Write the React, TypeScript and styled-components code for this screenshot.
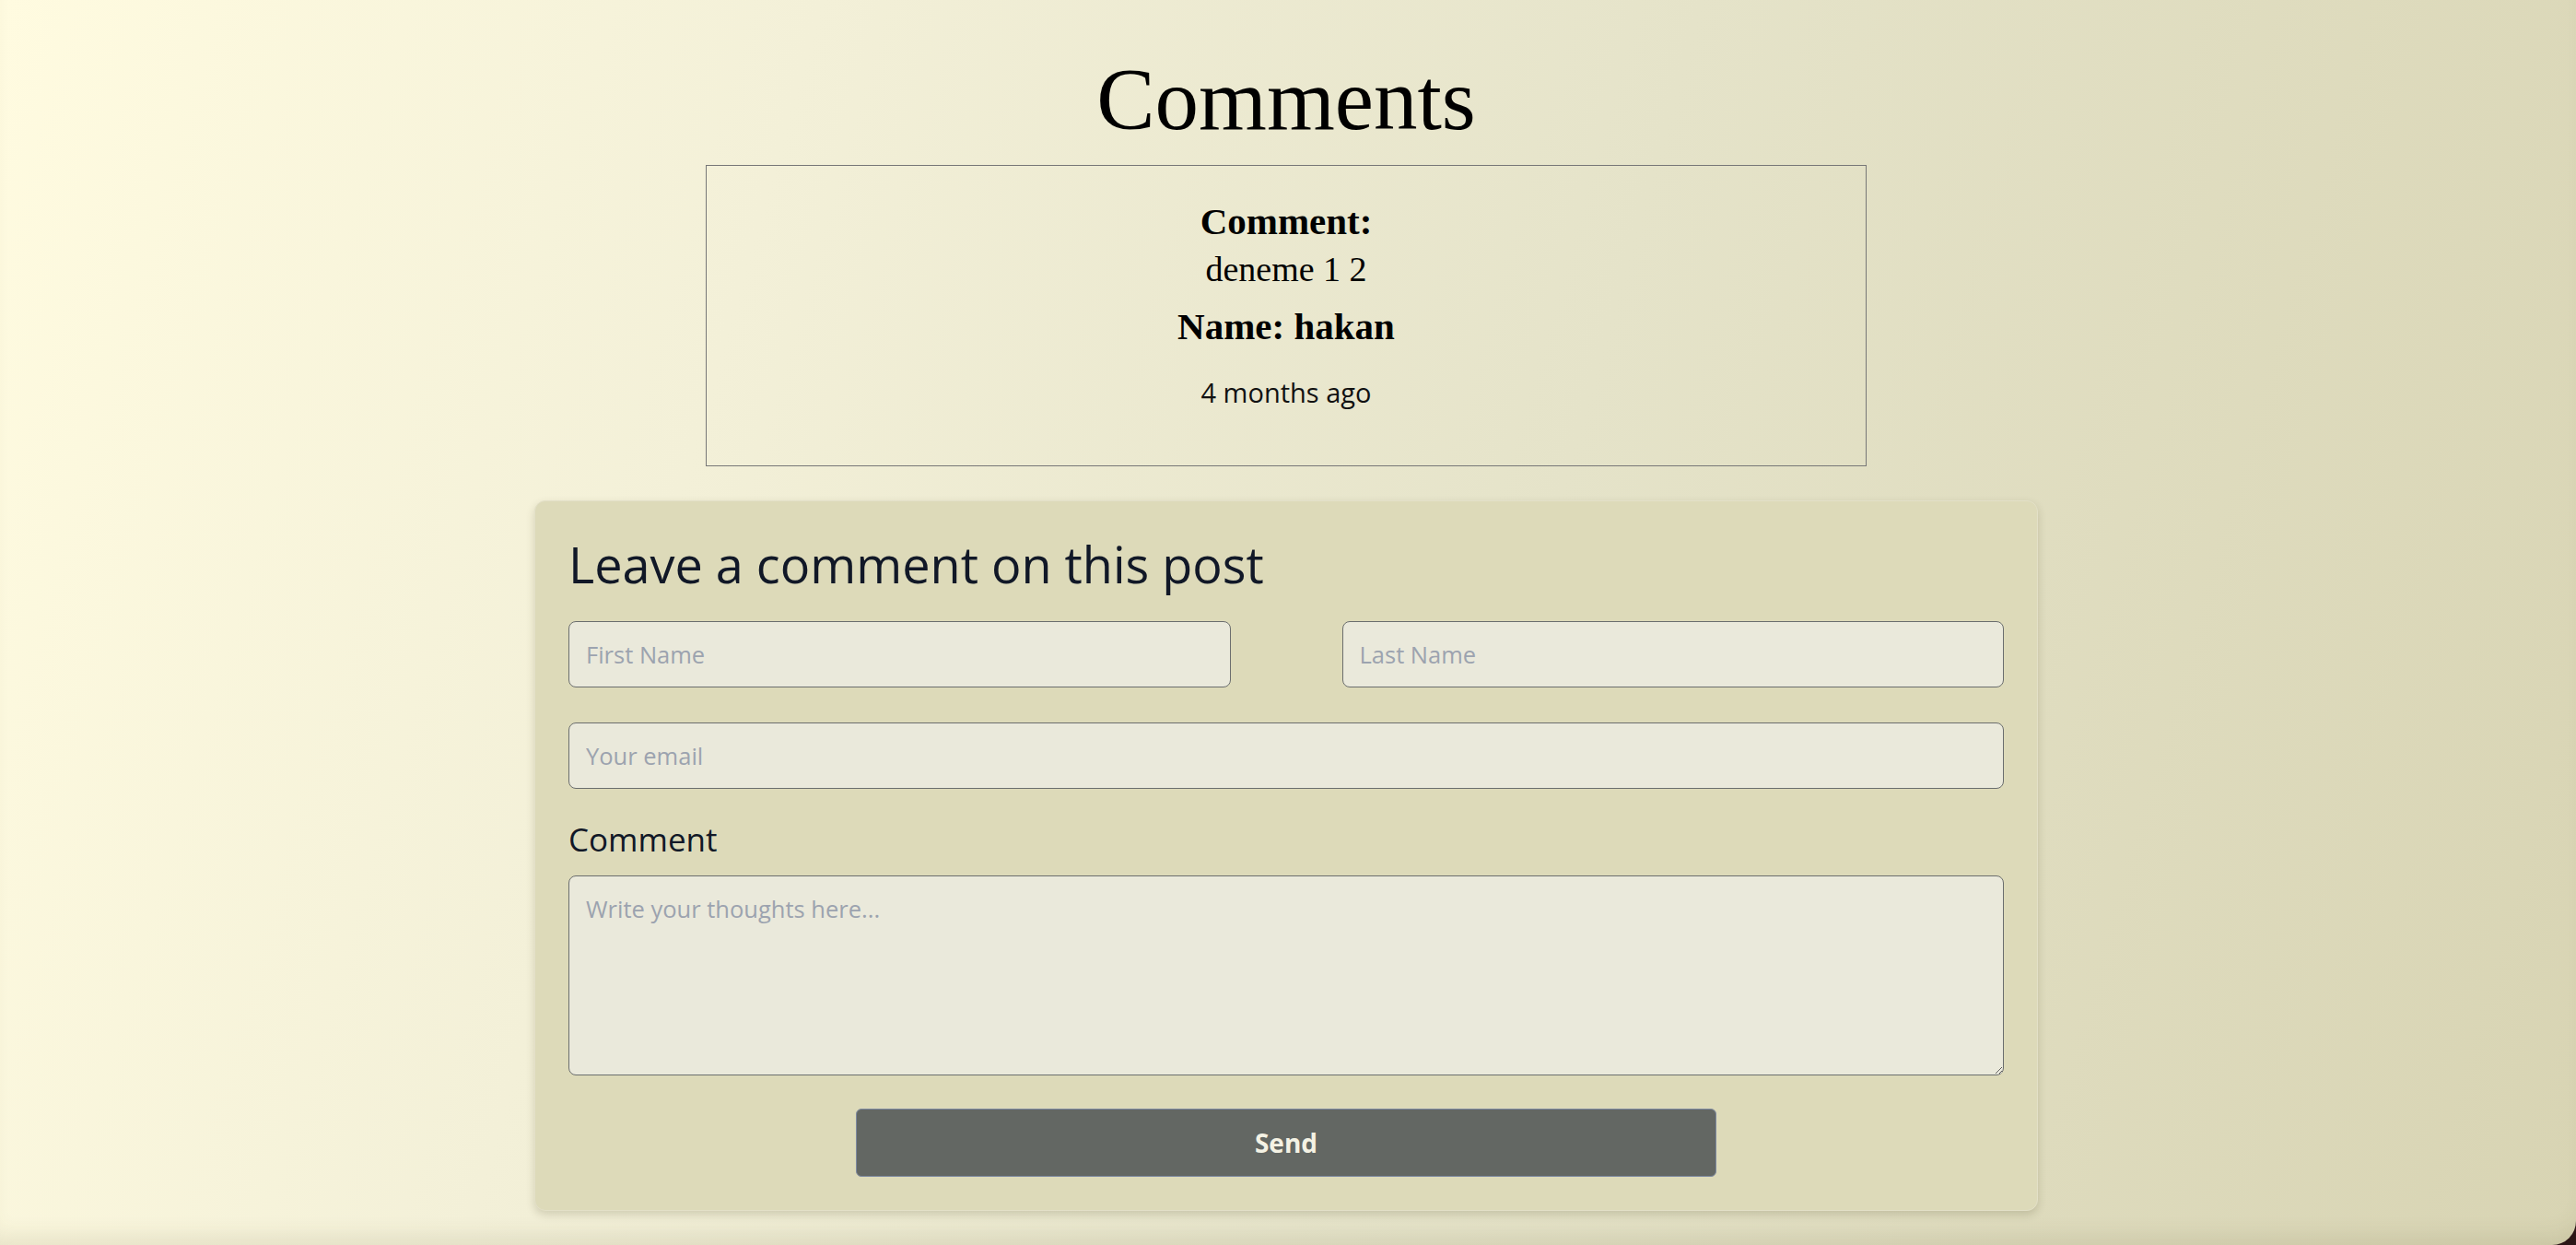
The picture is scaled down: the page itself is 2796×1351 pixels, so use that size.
import styled, { createGlobalStyle } from "styled-components";

const GlobalStyle = createGlobalStyle`
  html,
  body {
    margin: 0;
    padding: 0;
    background: #2b1616;
  }

  * {
    box-sizing: border-box;
  }
`;

const Page = styled.main`
  min-height: 100vh;
  display: flex;
  flex-direction: column;
  align-items: center;
  padding: 0 4px 28px 0;
  background: linear-gradient(106deg, #fffbe0 0%, #f3f0d8 28%, #e5e3c9 58%, #d8d4b3 100%);
  border-bottom-right-radius: 26px;
  box-shadow: inset 0 -22px 24px -14px rgba(90, 80, 40, 0.12);
`;

const Title = styled.h1`
  margin: 53px 0 16px;
  font-family: "Liberation Serif", "Times New Roman", serif;
  font-size: 95px;
  font-weight: 400;
  line-height: normal;
  color: #000;
`;

const CommentBox = styled.section`
  width: 1260px;
  padding: 36px 0 60px;
  border: 1px solid #777;
  display: flex;
  flex-direction: column;
  align-items: center;
`;

const Label = styled.h3`
  margin: 0;
  font-family: "Liberation Serif", "Times New Roman", serif;
  font-size: 41px;
  font-weight: 700;
  line-height: normal;
  color: #000;
`;

const Body = styled.p`
  margin: 6px 0 16px;
  font-family: "Liberation Serif", "Times New Roman", serif;
  font-size: 38px;
  line-height: normal;
  color: #000;
`;

const Time = styled.p`
  margin: 28px 0 0;
  font-family: "Open Sans", "Liberation Sans", sans-serif;
  font-size: 29px;
  line-height: normal;
  color: #111;
`;

const Card = styled.form`
  width: 1632px;
  margin-top: 37px;
  padding: 36px;
  background: #dddab9;
  border: 1px solid #e3e0c8;
  border-radius: 12px;
  box-shadow: 0 4px 10px rgba(60, 55, 20, 0.18);
  font-family: "Open Sans", "Liberation Sans", sans-serif;
`;

const CardTitle = styled.h2`
  margin: 0 0 29px;
  font-size: 54px;
  font-weight: 400;
  line-height: 1.2;
  color: #111827;
`;

const Row = styled.div`
  display: grid;
  grid-template-columns: 1fr 1fr;
  column-gap: 121px;
  margin-bottom: 38px;
`;

const Field = styled.input`
  width: 100%;
  height: 72px;
  padding: 0 18px;
  background: #eae9db;
  border: 1px solid #6b6e6e;
  border-radius: 8px;
  font-family: "Open Sans", "Liberation Sans", sans-serif;
  font-size: 25.5px;
  color: #111827;

  &::placeholder {
    color: #9ca3af;
  }
`;

const FieldLabel = styled.label`
  display: block;
  margin: 31px 0 16px;
  font-size: 35px;
  line-height: normal;
  color: #111827;
`;

const TextArea = styled.textarea`
  display: block;
  width: 100%;
  height: 217px;
  padding: 16px 18px;
  background: #eae9db;
  border: 1px solid #6b6e6e;
  border-radius: 8px;
  font-family: "Open Sans", "Liberation Sans", sans-serif;
  font-size: 25.5px;
  line-height: 1.5;
  color: #111827;

  &::placeholder {
    color: #9ca3af;
  }
`;

const SendButton = styled.button`
  display: block;
  width: 60%;
  height: 74px;
  margin: 36px auto 0;
  background: #636763;
  border: 1px solid #7d89a0;
  border-radius: 6px;
  font-family: "Open Sans", "Liberation Sans", sans-serif;
  font-size: 28px;
  font-weight: 700;
  color: #f4f2e4;
  cursor: pointer;
`;

const comment = {
  text: "deneme 1 2",
  name: "hakan",
  time: "4 months ago",
};

export default function App() {
  return (
    <>
      <GlobalStyle />
      <Page>
        <Title>Comments</Title>
        <CommentBox>
          <Label>Comment:</Label>
          <Body>{comment.text}</Body>
          <Label>Name: {comment.name}</Label>
          <Time>{comment.time}</Time>
        </CommentBox>
        <Card onSubmit={(e) => e.preventDefault()}>
          <CardTitle>Leave a comment on this post</CardTitle>
          <Row>
            <Field type="text" placeholder="First Name" />
            <Field type="text" placeholder="Last Name" />
          </Row>
          <Field type="email" placeholder="Your email" />
          <FieldLabel htmlFor="comment">Comment</FieldLabel>
          <TextArea id="comment" placeholder="Write your thoughts here..." />
          <SendButton type="submit">Send</SendButton>
        </Card>
      </Page>
    </>
  );
}
